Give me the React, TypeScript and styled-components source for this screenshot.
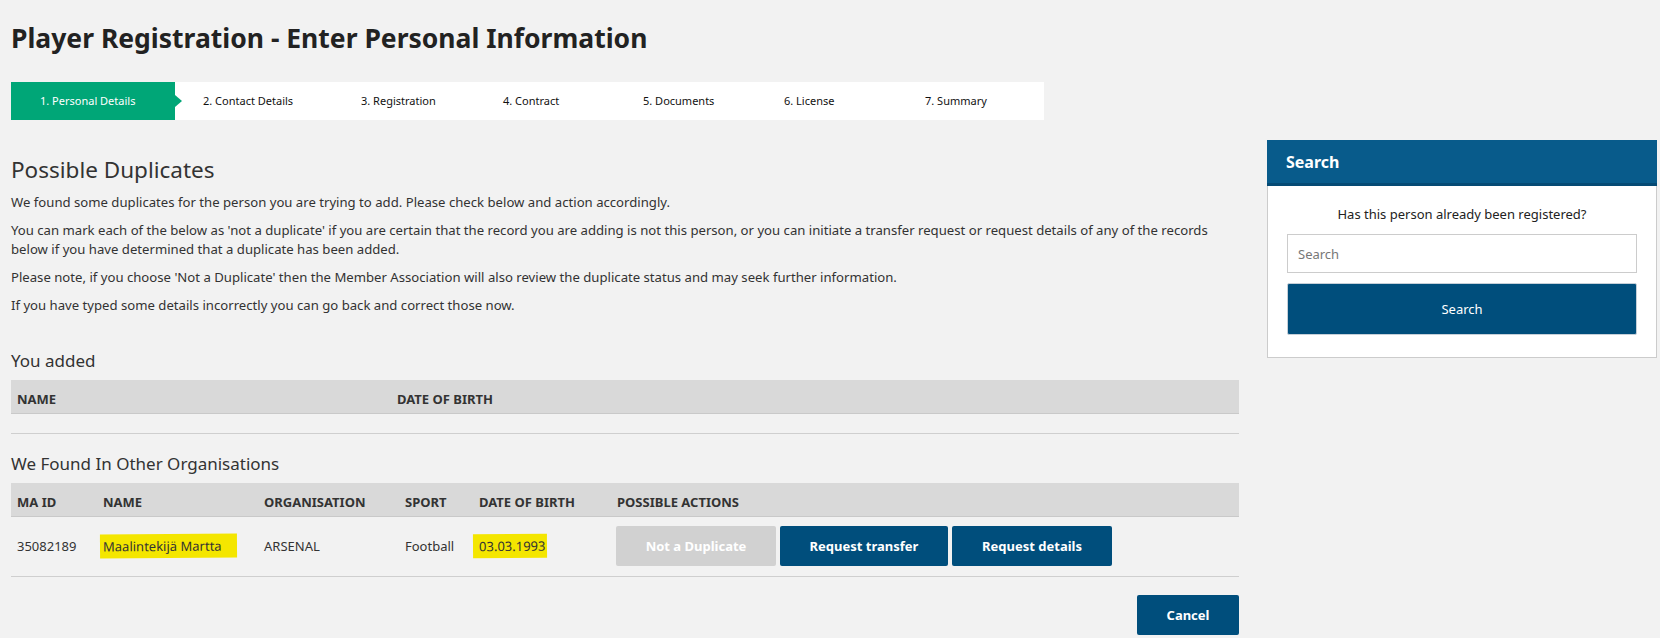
import React from "react";
import styled, { createGlobalStyle } from "styled-components";

const GlobalStyle = createGlobalStyle`
  html, body { margin: 0; padding: 0; background: #f2f2f2; }
  body { font-family: "Noto Sans", "Open Sans", sans-serif; color: #333; }
  * { box-sizing: border-box; }
`;

const Page = styled.div`
  padding: 20px 3px 4px 11px;
`;

const Title = styled.h1`
  margin: 0;
  font-size: 26.5px;
  line-height: 36px;
  font-weight: 700;
  color: #222;
`;

const Stepper = styled.ol`
  list-style: none;
  margin: 26px 0 0;
  padding: 0;
  width: 1033px;
  height: 38px;
  background: #fff;
  display: flex;
`;

const Step = styled.li<{ $w?: number; $pad?: number; $active?: boolean }>`
  position: relative;
  flex: ${(p) => (p.$w ? `0 0 ${p.$w}px` : "1 1 auto")};
  padding-left: ${(p) => p.$pad ?? 0}px;
  height: 38px;
  line-height: 38px;
  font-size: 11px;
  color: ${(p) => (p.$active ? "#fff" : "#111")};
  background: ${(p) => (p.$active ? "#00a677" : "transparent")};
  white-space: nowrap;
  &::after {
    content: "";
    display: ${(p) => (p.$active ? "block" : "none")};
    position: absolute;
    right: -7px;
    top: 13px;
    border-top: 6px solid transparent;
    border-bottom: 6px solid transparent;
    border-left: 7px solid #00a677;
  }
`;

const Main = styled.div`
  display: flex;
  gap: 28px;
  margin-top: 20px;
  align-items: flex-start;
`;

const Content = styled.div`
  flex: 1 1 auto;
  min-width: 0;
  padding-top: 15px;
`;

const H2 = styled.h2`
  margin: 0 0 7.5px;
  font-size: 22.5px;
  line-height: 30px;
  font-weight: 400;
  color: #333;
`;

const Para = styled.p`
  margin: 0 0 9px;
  font-size: 13.15px;
  line-height: 19px;
  color: #333;
`;

const SectionTitle = styled.h3<{ $top: number }>`
  margin: ${(p) => p.$top}px 0 8px;
  font-size: 17px;
  line-height: 23px;
  font-weight: 400;
  color: #333;
`;

const Grid = styled.div<{ $cols: string }>`
  display: grid;
  grid-template-columns: ${(p) => p.$cols};
`;

const HeadRow = styled(Grid)`
  background: #d9d9d9;
  border-bottom: 1px solid #c9c9c9;
  height: 34px;
`;

const HeadCell = styled.div`
  padding: 10px 6px 0;
  font-size: 13px;
  line-height: 18px;
  font-weight: 700;
  color: #333;
  white-space: nowrap;
`;

const EmptyBody = styled.div`
  height: 20px;
  border-bottom: 1px solid #cfcfcf;
`;

const BodyRow = styled(Grid)`
  min-height: 60px;
  align-items: center;
  border-bottom: 1px solid #cfcfcf;
`;

const Cell = styled.div`
  padding: 0 6px;
  font-size: 13px;
  line-height: 18px;
  color: #333;
  white-space: nowrap;
`;

const Highlight = styled.span<{ $l: number; $r: number }>`
  display: inline-block;
  background: #f4e600;
  color: #333;
  margin-left: -${(p) => p.$l}px;
  padding: 3px ${(p) => p.$r}px 3px ${(p) => p.$l}px;
  transform: rotate(-0.4deg);
`;

const Actions = styled.div`
  display: flex;
  gap: 4px;
  padding: 0 5px;
`;

const Button = styled.button<{ $w: number; $disabled?: boolean }>`
  width: ${(p) => p.$w}px;
  height: 40px;
  border: none;
  border-radius: 2px;
  font-family: "Noto Sans", sans-serif;
  font-size: 13px;
  font-weight: 700;
  color: #fff;
  background: ${(p) => (p.$disabled ? "#d1d1d1" : "#004e7c")};
  cursor: pointer;
`;

const Footer = styled.div`
  display: flex;
  justify-content: flex-end;
  margin-top: 18px;
`;

const Panel = styled.aside`
  flex: 0 0 390px;
  background: #fff;
  border: 1px solid #cccccc;
  border-top: none;
`;

const PanelHeader = styled.div`
  height: 46px;
  padding: 2px 19px 0;
  line-height: 41px;
  background: #085b8b;
  border-bottom: 3px solid #054a74;
  color: #fff;
  font-size: 16px;
  font-weight: 700;
  margin: 0 -1px;
`;

const PanelBody = styled.div`
  padding: 19px 19px 22px;
  display: flex;
  flex-direction: column;
`;

const PanelText = styled.div`
  text-align: center;
  font-size: 13px;
  line-height: 19px;
  color: #222;
  margin-bottom: 10px;
`;

const SearchInput = styled.input`
  height: 39px;
  border: 1px solid #cccccc;
  padding: 0 10px;
  font-family: "Noto Sans", sans-serif;
  font-size: 13px;
  color: #333;
  background: #fff;
  outline: none;
  &::placeholder { color: #777; }
`;

const SearchButton = styled.button`
  margin-top: 10px;
  height: 52px;
  border: 1px solid #c5cfd8;
  border-radius: 2px;
  background: #004e7c;
  color: #fff;
  font-family: "Noto Sans", sans-serif;
  font-size: 13px;
  font-weight: 400;
  cursor: pointer;
`;

const steps = [
  { label: "1. Personal Details", w: 164, pad: 29, active: true },
  { label: "2. Contact Details", w: 186, pad: 28 },
  { label: "3. Registration", w: 142 },
  { label: "4. Contract", w: 140 },
  { label: "5. Documents", w: 141 },
  { label: "6. License", w: 141 },
  { label: "7. Summary" },
];

const foundCols = "86px 161px 141px 74px 138px 1fr";
const addedCols = "380px 1fr";

export default function App() {
  return (
    <>
      <GlobalStyle />
      <Page>
        <Title>Player Registration - Enter Personal Information</Title>
        <Stepper>
          {steps.map((s) => (
            <Step key={s.label} $w={s.w} $pad={s.pad} $active={s.active}>
              {s.label}
            </Step>
          ))}
        </Stepper>
        <Main>
          <Content>
            <H2>Possible Duplicates</H2>
            <Para>
              We found some duplicates for the person you are trying to add. Please check below and action accordingly.
            </Para>
            <Para>
              You can mark each of the below as 'not a duplicate' if you are certain that the record you are adding is not this person, or you can initiate a transfer request or request details of any of the records below if you have determined that a duplicate has been added.
            </Para>
            <Para>
              Please note, if you choose 'Not a Duplicate' then the Member Association will also review the duplicate status and may seek further information.
            </Para>
            <Para>If you have typed some details incorrectly you can go back and correct those now.</Para>

            <SectionTitle $top={34}>You added</SectionTitle>
            <HeadRow $cols={addedCols}>
              <HeadCell>NAME</HeadCell>
              <HeadCell>DATE OF BIRTH</HeadCell>
            </HeadRow>
            <EmptyBody />

            <SectionTitle $top={18}>We Found In Other Organisations</SectionTitle>
            <HeadRow $cols={foundCols}>
              <HeadCell>MA ID</HeadCell>
              <HeadCell>NAME</HeadCell>
              <HeadCell>ORGANISATION</HeadCell>
              <HeadCell>SPORT</HeadCell>
              <HeadCell>DATE OF BIRTH</HeadCell>
              <HeadCell>POSSIBLE ACTIONS</HeadCell>
            </HeadRow>
            <BodyRow $cols={foundCols}>
              <Cell>35082189</Cell>
              <Cell>
                <Highlight $l={3} $r={15}>Maalintekijä Martta</Highlight>
              </Cell>
              <Cell>ARSENAL</Cell>
              <Cell>Football</Cell>
              <Cell>
                <Highlight $l={6} $r={2}>03.03.1993</Highlight>
              </Cell>
              <Actions>
                <Button $w={160} $disabled>Not a Duplicate</Button>
                <Button $w={168}>Request transfer</Button>
                <Button $w={160}>Request details</Button>
              </Actions>
            </BodyRow>
            <Footer>
              <Button $w={102}>Cancel</Button>
            </Footer>
          </Content>
          <Panel>
            <PanelHeader>Search</PanelHeader>
            <PanelBody>
              <PanelText>Has this person already been registered?</PanelText>
              <SearchInput placeholder="Search" />
              <SearchButton>Search</SearchButton>
            </PanelBody>
          </Panel>
        </Main>
      </Page>
    </>
  );
}
